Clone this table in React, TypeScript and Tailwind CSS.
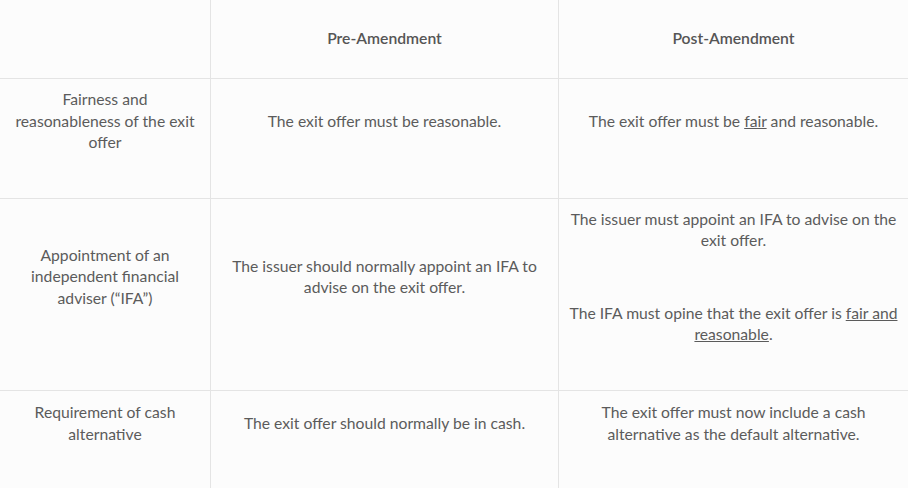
const rows = [
  {
    label: 'Fairness and reasonableness of the exit offer',
    pre: [<>The exit offer must be reasonable.</>],
    post: [
      <>
        The exit offer must be <u>fair</u> and reasonable.
      </>,
    ],
  },
  {
    label: 'Appointment of an independent financial adviser (“IFA”)',
    pre: [<>The issuer should normally appoint an IFA to advise on the exit offer.</>],
    post: [
      <>The issuer must appoint an IFA to advise on the exit offer.</>,
      <>
        The IFA must opine that the exit offer is <u>fair and reasonable</u>.
      </>,
    ],
  },
  {
    label: 'Requirement of cash alternative',
    pre: [<>The exit offer should normally be in cash.</>],
    post: [<>The exit offer must now include a cash alternative as the default alternative.</>],
  },
]

function Cell({ paras, border }: { paras: React.ReactNode[]; border?: boolean }) {
  return (
    <div
      className={`flex flex-col justify-center px-[10px] pt-[10px] pb-[10px] text-center ${
        border ? 'border-l border-[#e4e4e4]' : ''
      }`}
    >
      {paras.map((p, i) => (
        <p key={i} className={i < paras.length - 1 ? 'mb-[51px]' : 'mb-[34px]'}>
          {p}
        </p>
      ))}
    </div>
  )
}

export default function App() {
  return (
    <div
      className="flex flex-col w-[908px] h-[488px] overflow-hidden bg-[#fcfcfc] text-[#5b5b5b] text-[15.7px] leading-[21.5px]"
      style={{ fontFamily: 'Lato, "Noto Sans", sans-serif' }}
    >
      <div className="grid grid-cols-[210px_348px_350px] h-[79px] shrink-0 border-b border-[#e4e4e4]">
        <div />
        <div className="flex items-center justify-center border-l border-[#e4e4e4] font-semibold text-[#555]">
          Pre-Amendment
        </div>
        <div className="flex items-center justify-center border-l border-[#e4e4e4] font-semibold text-[#555]">
          Post-Amendment
        </div>
      </div>
      {rows.map((r, i) => (
        <div
          key={i}
          className={`grid grid-cols-[210px_348px_350px] shrink-0 ${
            i < rows.length - 1 ? 'border-b border-[#e4e4e4]' : 'min-h-[100px]'
          }`}
        >
          <Cell paras={[r.label]} />
          <Cell paras={r.pre} border />
          <Cell paras={r.post} border />
        </div>
      ))}
    </div>
  )
}
